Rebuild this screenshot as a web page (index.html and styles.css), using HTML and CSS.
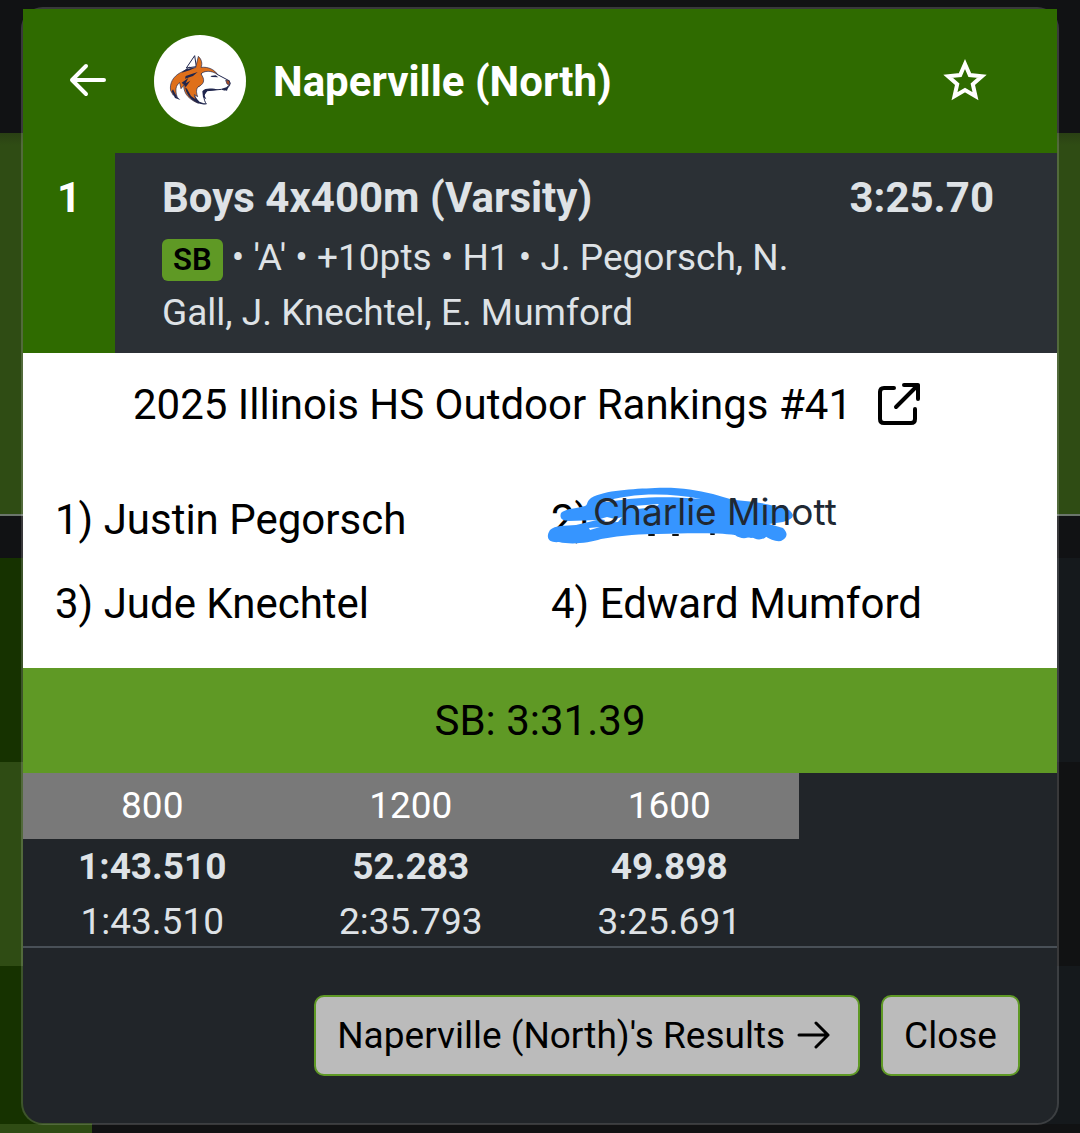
FILE: index.html
```html
<!DOCTYPE html>
<html lang="en">
  <head>
    <meta charset="UTF-8" />
    <meta name="viewport" content="width=device-width, initial-scale=1.0" />
    <title>Naperville (North) - Boys 4x400m</title>
    <link rel="stylesheet" href="styles.css">
  </head>
  <body>
    <!-- dimmed results list behind the modal -->
    <div class="backdrop" aria-hidden="true">
      <div class="bg-row bg-top"></div>
      <div class="bg-row bg-banner"></div>
      <div class="bg-row bg-gap"></div>
      <div class="bg-row bg-item"><span class="bg-place"></span></div>
      <div class="bg-row bg-item bg-alt"><span class="bg-place"></span></div>
      <div class="bg-row bg-item bg-last"><span class="bg-place"></span></div>
      <div class="bg-row bg-item bg-alt bg-rest"><span class="bg-place"></span></div>
    </div>

    <div class="modal" role="dialog" aria-labelledby="teamName">
      <header class="modal-header">
        <button class="icon-btn back-btn" type="button" aria-label="Back">
          <svg width="38" height="34" viewBox="0 0 38 34" fill="none" stroke="#fff" stroke-width="4" stroke-linecap="round" stroke-linejoin="round">
            <path d="M35 17H3M17 3L3 17l14 14" />
          </svg>
        </button>
        <span class="team-logo">
          <svg viewBox="0 0 276 276" width="92" height="92" role="img" aria-label="Huskies logo">
            <g transform="translate(33 45)" stroke-linejoin="round">
              <path fill="#fff" stroke="#20264d" stroke-width="3" d="M64 54L89 17l5 33zM108 70C122 56 148 60 158 74L192 92L196 100L190 112L178 120L170 118L128 122C112 132 116 150 124 162C104 160 78 150 66 126L104 108z" />
              <path fill="#df701b" stroke="#20264d" stroke-width="2" d="M17 122C13 100 24 80 46 68C64 58 80 54 92 53L100 19C110 28 113 42 108 52C130 50 148 58 158 74C140 60 116 62 108 72C120 88 118 100 104 108C94 112 92 124 98 140L88 134L100 160C76 150 56 134 56 106L48 116L44 98C32 106 30 120 36 140L26 128L25 136z" />
              <path fill="#20264d" d="M56 62L76 48L66 58L92 52L76 60L50 68zM62 78L98 66L84 78L60 86zM50 98L70 84L62 100L76 92L62 112L58 106zM66 116L78 138L92 148L86 136L104 156L122 164C96 164 66 146 60 112zM24 118L34 138L46 150L30 144L20 124zM136 78L152 76L160 82L140 81zM112 124C120 112 146 116 160 119L126 123L118 136L124 148L114 142zM170 116L184 112L192 104L186 122L176 120z" />
              <path fill="#a64c24" stroke="#20264d" stroke-width="2" d="M182 91L193 92L194 106L186 102z" />
            </g>
          </svg>
        </span>
        <h1 class="team-name" id="teamName">Naperville (North)</h1>
        <button class="icon-btn star-btn" type="button" aria-label="Favorite">
          <svg width="44" height="44" viewBox="0 0 44 44" fill="none" stroke="#fff" stroke-width="4">
            <path d="M22 6l4.800 11.100 12.100 1.100-9.100 8 2.700 12L22 32l-10.500 6.200 2.700-12-9.100-8 12.100-1.100z" />
          </svg>
        </button>
      </header>

      <section class="result">
        <div class="place">1</div>
        <div class="result-body">
          <div class="result-top">
            <h2 class="event">Boys 4x400m (Varsity)</h2>
            <span class="mark">3:25.70</span>
          </div>
          <p class="details"><span class="badge">SB</span> • 'A' • +10pts • H1 • J. Pegorsch, N. Gall, J. Knechtel, E. Mumford</p>
        </div>
      </section>

      <section class="relay">
        <a class="rankings" href="#rankings">
          2025 Illinois HS Outdoor Rankings #41
          <svg width="44" height="46" viewBox="0 0 44 46" fill="none" stroke="#000" stroke-width="4" stroke-linecap="round" stroke-linejoin="round">
            <path d="M17 6H7Q3 6 3 10V37Q3 41 7 41H34Q38 41 38 37V27M19 25L41 3M27 3H41V17" />
          </svg>
        </a>
        <div class="runners">
          <div>1) Justin Pegorsch</div>
          <div class="edited">
            2)
            <svg class="scribble" width="284" height="64" viewBox="0 0 284 64" aria-hidden="true">
              <path stroke="#111" stroke-width="2" stroke-linecap="round" d="M106 53h5M130 53h5M168 52h3M192 52h3" />
              <path fill="#3695ff" d="M7 48C2 56 6 61 16 60C28 63 46 61 58 57C80 53 99 52 115 52C150 51 175 51 192 53C197 57 204 57 208 54C213 60 226 58 225 49C224 45 222 43 220 41C230 41 235 36 232 31C228 26 220 26 212 24C198 20 183 16 170 12C152 8 136 5 112 6C90 7 62 8 48 16C43 20 45 23 42 24C32 27 24 26 18 31C16 37 20 39 26 39L54 38L33 43C22 44 12 43 7 48Z" />
              <path fill="#3695ff" d="M192 18Q222 20 246 28Q256 36 240 40L226 42L240 46Q248 54 238 59Q230 60 222 54L208 56L196 53z" />
              <path fill="#fff" d="M60 20C86 11 125 10 158 17C124 14 92 15 66 20ZM90 24l26-2-3 3-19 2zM64 35l8 2 7-2-4 5-15 1 2-3-5-1zM46 46l11-1-10 3z" />
            </svg>
            <span class="edited-name">Charlie Minott</span>
          </div>
          <div>3) Jude Knechtel</div>
          <div>4) Edward Mumford</div>
        </div>
      </section>

      <div class="season-best">SB: 3:31.39</div>

      <div class="splits-wrap">
        <table class="splits">
          <thead>
            <tr><th scope="col">800</th><th scope="col">1200</th><th scope="col">1600</th></tr>
          </thead>
          <tbody>
            <tr class="lap"><td>1:43.510</td><td>52.283</td><td>49.898</td></tr>
            <tr><td>1:43.510</td><td>2:35.793</td><td>3:25.691</td></tr>
          </tbody>
        </table>
      </div>

      <footer class="modal-footer">
        <button class="btn" type="button">
          Naperville (North)'s Results
          <svg width="40" height="30" viewBox="0 0 40 30" fill="none" stroke="#000" stroke-width="3" stroke-linecap="round" stroke-linejoin="round">
            <path d="M2 14H31M19 2L31 14L19 26" />
          </svg>
        </button>
        <button class="btn" type="button">Close</button>
      </footer>
    </div>
  </body>
</html>
```
FILE: styles.css
```css
* {
  box-sizing: border-box;
}

body {
  margin: 0;
  min-height: 100vh;
  display: grid;
  background: #111214;
  color: #dee2e6;
  font-family: Roboto, "Liberation Sans", sans-serif;
  font-size: 37px;
  line-height: 55px;
}

/* the list and the modal share one grid cell */
.backdrop,
.modal {
  grid-area: 1 / 1;
}

.backdrop {
  display: flex;
  flex-direction: column;
}

.bg-row {
  display: flex;
  height: 204px;
}

.bg-row.bg-top {
  height: 133px;
}

.bg-row.bg-banner {
  height: 383px;
  background: linear-gradient(#2a4014, #2f4c14 12px);
  border-bottom: 2px solid #6b756b;
}

.bg-row.bg-gap {
  height: 42px;
}

.bg-item {
  background: #15191c;
}

.bg-alt {
  background: #111213;
}

.bg-place {
  width: 92px;
  background: #163200;
}

.bg-alt .bg-place {
  background: #2f4c14;
}

.bg-row.bg-last {
  height: 158px;
}

.bg-row.bg-rest {
  height: auto;
  flex: 1;
}

.modal {
  position: relative;
  align-self: start;
  margin: 7px 21px 8px;
  background: #212529;
  background-clip: padding-box;
  border: 2px solid rgba(255, 255, 255, 0.17);
  border-radius: 22px;
}

.modal-header {
  display: flex;
  align-items: center;
  height: 144px;
  padding: 0 70px 0 46px;
  background: #2f6b00;
}

.icon-btn {
  padding: 0 0 3px;
  border: 0;
  background: none;
  cursor: pointer;
}

.icon-btn svg {
  display: block;
}

.team-logo {
  display: flex;
  width: 92px;
  height: 92px;
  margin: 0 27px 0 47px;
  border-radius: 50%;
  background: #fff;
}

.team-name {
  flex: 1;
  margin: 0;
  color: #fff;
  font-size: 42px;
  font-weight: 700;
}

.result {
  display: flex;
  background: #2b3035;
}

.place {
  width: 92px;
  padding-top: 17px;
  background: #2f6b00;
  color: #fff;
  font-size: 42px;
  font-weight: 700;
  text-align: center;
}

.result-body {
  flex: 1;
  padding: 17px 63px 13px 47px;
}

.result-top {
  display: flex;
  justify-content: space-between;
  height: 60px;
  font-size: 42px;
  font-weight: 700;
}

.event {
  margin: 0;
  font-size: inherit;
}

.details {
  max-width: 660px;
  margin: 0;
}

.badge {
  display: inline-block;
  padding: 0 11px;
  border-radius: 6px;
  background: #5f9925;
  color: #000;
  font-size: 31px;
  font-weight: 600;
  line-height: 42px;
}

.relay {
  padding: 20px 0 33px;
  background: #fff;
  color: #000;
  font-size: 42px;
  line-height: 63px;
}

.rankings {
  display: flex;
  justify-content: center;
  align-items: center;
  gap: 25px;
  padding-right: 26px;
  margin-bottom: 52px;
  color: inherit;
  text-decoration: none;
}

.runners {
  display: grid;
  grid-template-columns: 1fr 1fr;
  row-gap: 21px;
  padding: 0 10px 0 32px;
}

.edited {
  position: relative;
}

/* markup drawn over the old name */
.scribble {
  position: absolute;
  top: -6px;
  left: -8px;
}

.edited-name {
  position: absolute;
  top: -8px;
  left: 42px;
  color: #202833;
  font-family: Inter, Roboto, sans-serif;
  font-size: 37px;
}

.season-best {
  background: #5f9925;
  color: #000;
  font-size: 42px;
  line-height: 105px;
  text-align: center;
}

.splits-wrap {
  border-bottom: 2px solid #495057;
}

.splits {
  width: 75%;
  table-layout: fixed;
  border-collapse: collapse;
  text-align: center;
}

.splits th {
  padding: 0;
  background: #797979;
  color: #fff;
  font-weight: 400;
  line-height: 66px;
}

.splits td {
  padding: 3px 0 0;
  line-height: 49px;
}

.splits .lap td {
  padding: 0;
  line-height: 55px;
  font-weight: 700;
}

.modal-footer {
  display: flex;
  justify-content: flex-end;
  gap: 21px;
  padding: 47px 37px;
}

.btn {
  display: flex;
  align-items: center;
  gap: 12px;
  height: 81px;
  padding: 0 21px;
  border: 2px solid #5f9925;
  border-radius: 10px;
  background: #bbb;
  color: #000;
  font: inherit;
  cursor: pointer;
}
```
